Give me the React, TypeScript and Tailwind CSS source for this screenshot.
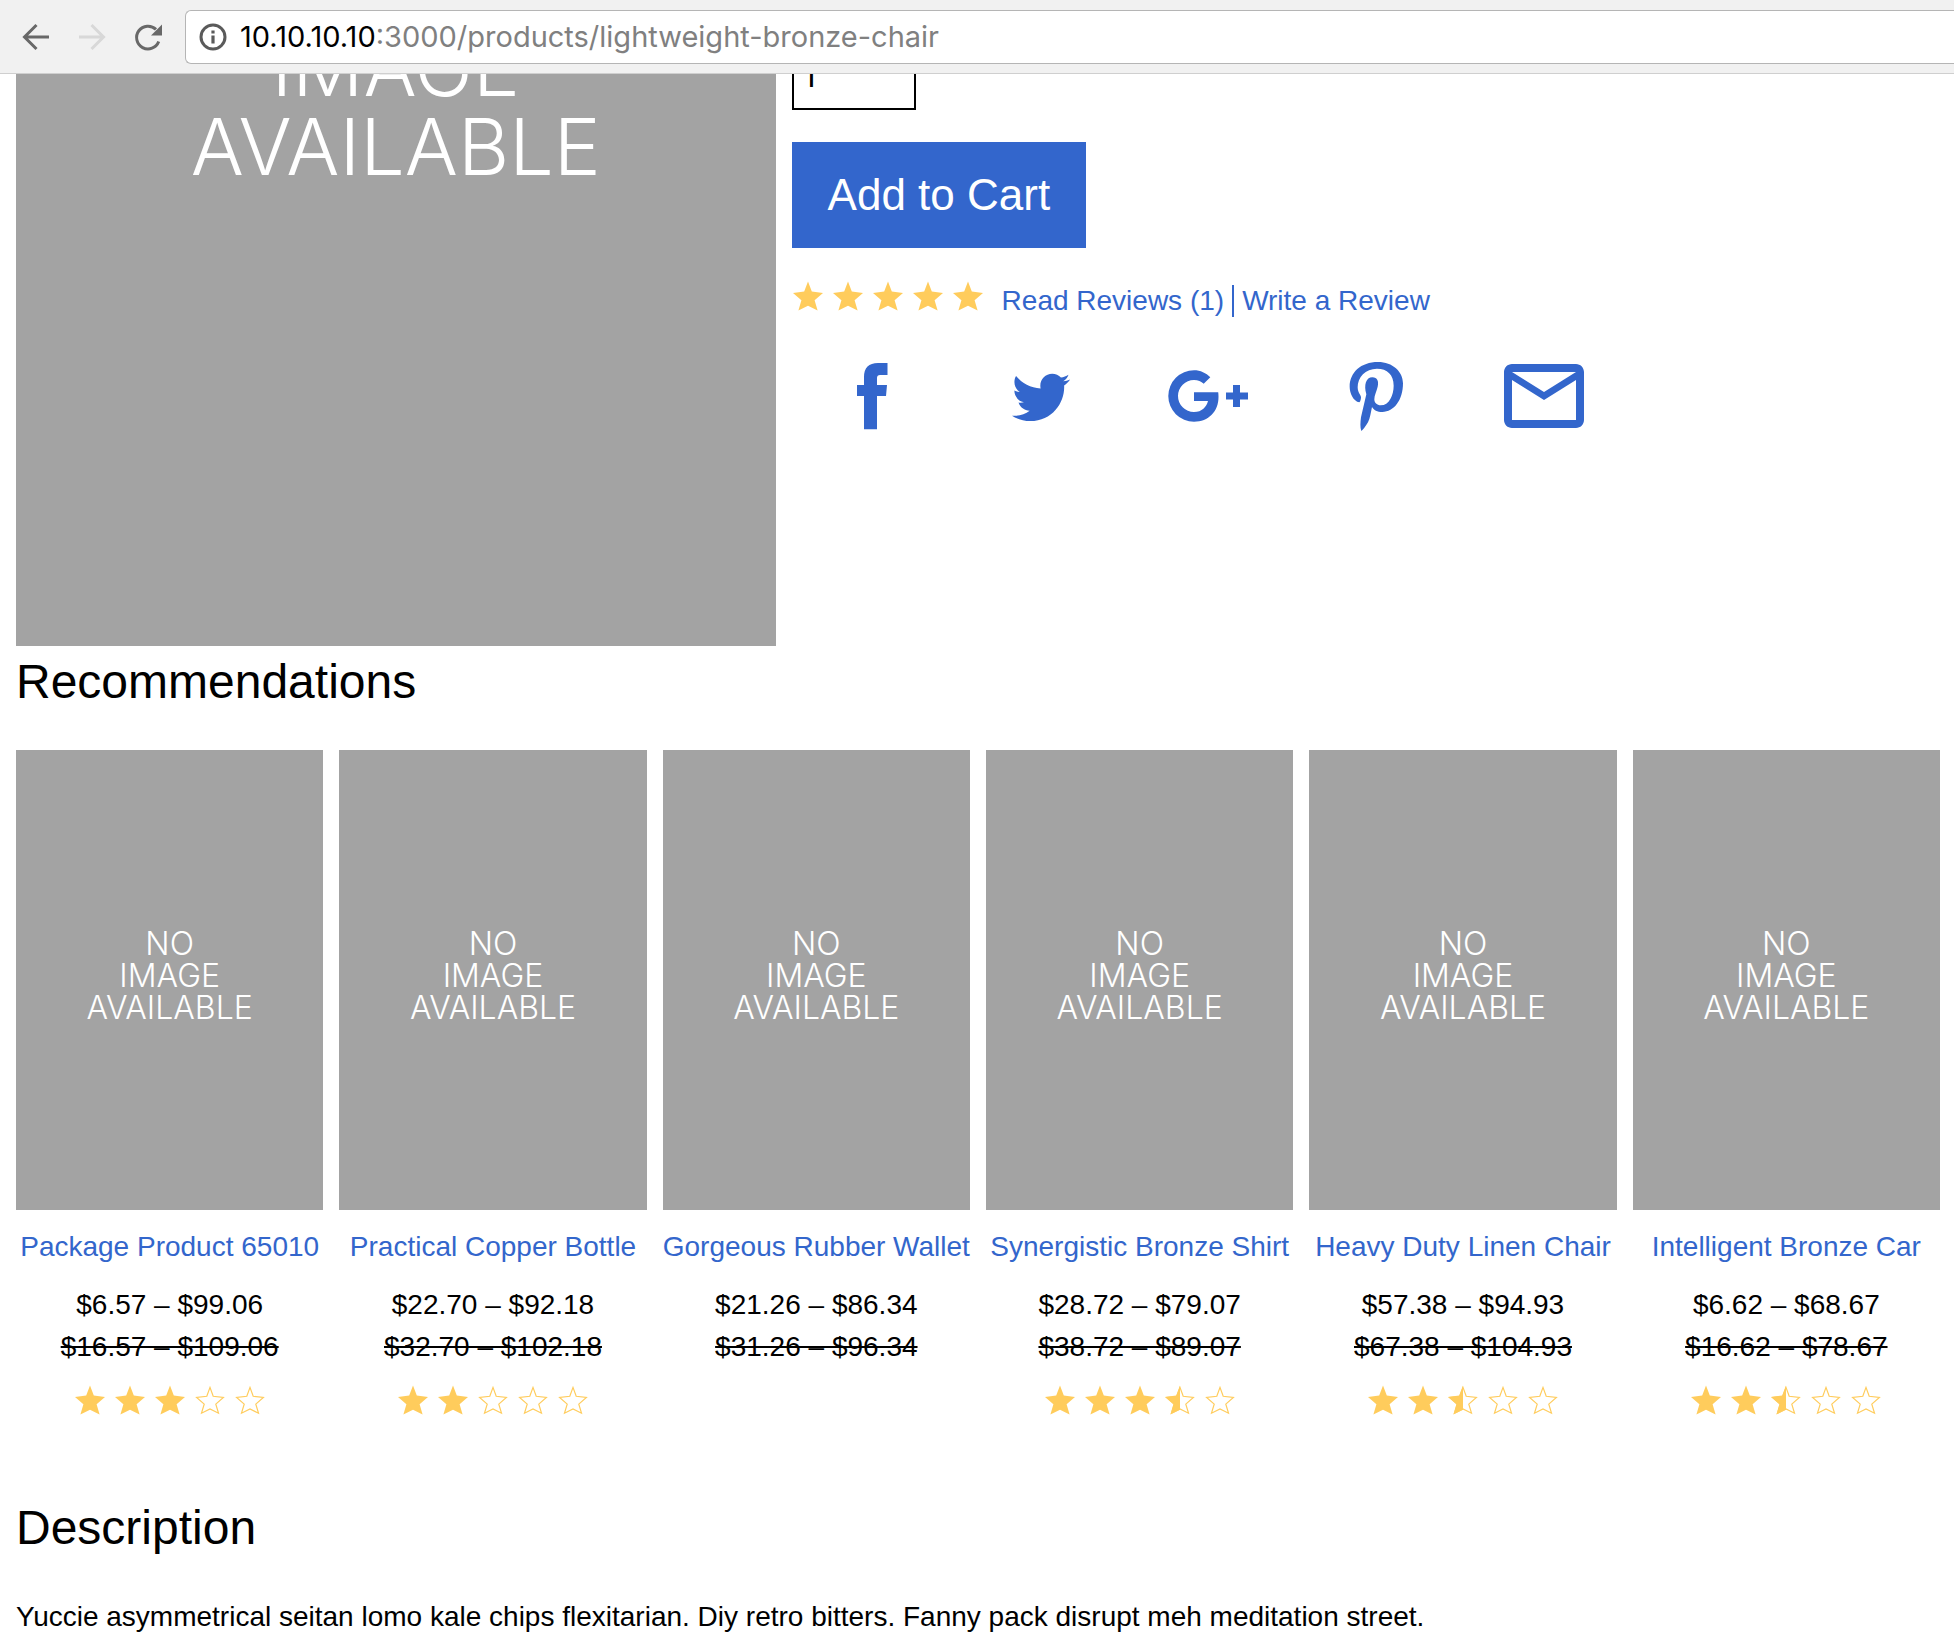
import React from "react";

type Fill = "full" | "half" | "empty";

const STAR =
  "M16 1.5 19.8 11.6 31 12.9 22.6 20.2 25.6 30.5 16 25.8 6.4 30.5 9.4 20.2 1 12.9 12.2 11.6Z";

function Star({ fill }: { fill: Fill }) {
  return (
    <svg viewBox="0 0 32 32" className="size-8 shrink-0" aria-hidden="true">
      {fill === "full" && <path d={STAR} fill="#ffcc5c" />}
      {fill === "half" && <path d="M16 1.5V25.8L6.4 30.5 9.4 20.2 1 12.9 12.2 11.6Z" fill="#ffcc5c" />}
      {fill !== "full" && (
        <path
          d="M16 3.4 19.2 12.3 29.4 13.5 21.8 20.1 24.5 29.2 16 25 7.5 29.2 10.2 20.1 2.6 13.5 12.8 12.3Z"
          fill="none"
          stroke="#ffcc5c"
          strokeWidth="1.2"
        />
      )}
    </svg>
  );
}

function Rating({ value }: { value: number }) {
  return (
    <div className="flex gap-2" role="img" aria-label={`${value} out of 5 stars`}>
      {[1, 2, 3, 4, 5].map((n) => (
        <Star key={n} fill={value >= n ? "full" : value >= n - 0.5 ? "half" : "empty"} />
      ))}
    </div>
  );
}

function Placeholder({ large = false }: { large?: boolean }) {
  return (
    <div className="flex aspect-[308/461] w-full shrink-0 items-center justify-center bg-[#a3a3a3]">
      <p
        className={
          large
            ? "pb-5 text-center font-[Inter] text-[79px] leading-[79px] font-light text-white"
            : "pb-2 text-center font-[Inter] text-[32px] leading-8 font-light text-white"
        }
      >
        NO
        <br />
        IMAGE
        <br />
        AVAILABLE
      </p>
    </div>
  );
}

const products = [
  { name: "Package Product 65010", price: "$6.57 – $99.06", was: "$16.57 – $109.06", rating: 3 },
  { name: "Practical Copper Bottle", price: "$22.70 – $92.18", was: "$32.70 – $102.18", rating: 2 },
  { name: "Gorgeous Rubber Wallet", price: "$21.26 – $86.34", was: "$31.26 – $96.34", rating: null },
  { name: "Synergistic Bronze Shirt", price: "$28.72 – $79.07", was: "$38.72 – $89.07", rating: 3.5 },
  { name: "Heavy Duty Linen Chair", price: "$57.38 – $94.93", was: "$67.38 – $104.93", rating: 2.5 },
  { name: "Intelligent Bronze Car", price: "$6.62 – $68.67", was: "$16.62 – $78.67", rating: 2.5 },
];

const shares = [
  {
    label: "Facebook",
    icon: (
      <path d="M63.5 15V27H56Q53 27 53 30V37H63L62 48H53V81.3H40V48H33V37H40V29Q40 15 54 15Z" />
    ),
  },
  {
    label: "Twitter",
    icon: (
      <path
        transform="translate(20 20.4) scale(.1135)"
        d="M459.37 151.716c.325 4.548.325 9.097.325 13.645 0 138.72-105.583 298.558-298.558 298.558-59.452 0-114.68-17.219-161.137-47.106 8.447.974 16.568 1.299 25.34 1.299 49.055 0 94.213-16.568 130.274-44.832-46.132-.975-84.792-31.188-98.112-72.772 6.498.974 12.995 1.624 19.818 1.624 9.421 0 18.843-1.3 27.614-3.573-48.081-9.747-84.143-51.98-84.143-102.985v-1.299c13.969 7.797 30.214 12.67 47.431 13.319-28.264-18.843-46.781-51.005-46.781-87.391 0-19.492 5.197-37.36 14.294-52.954 51.655 63.675 129.3 105.258 216.365 109.807-1.624-7.797-2.599-15.918-2.599-24.04 0-57.828 46.782-104.934 104.934-104.934 30.213 0 57.502 12.67 76.67 33.137 23.715-4.548 46.456-13.32 66.599-25.34-7.798 24.366-24.366 44.833-46.132 57.827 21.117-2.273 41.584-8.122 60.426-16.243-14.292 20.791-32.161 39.308-52.628 54.253z"
      />
    ),
  },
  {
    label: "Google Plus",
    icon: (
      <>
        <path d="M58.2 44.3H34V53H48C46.5 59 42 64 34 64A16 16 0 1 1 34 32C38 32 41.3 33.4 43.7 35.7L50.3 29.3C46 25 40.5 22.3 34 22.3A25.7 25.7 0 1 0 34 73.7C48.5 73.7 58.5 63.5 58.5 49C58.5 47 58.4 45.8 58.2 44.3Z" />
        <path d="M73 37H80V44.4H88V51.6H80V59H73V51.6H66V44.4H73Z" />
      </>
    ),
  },
  {
    label: "Pinterest",
    icon: (
      <path
        transform="translate(-188 -8) scale(.33333)"
        d="M658 187C640 183 629 160 629 140C629 98 662 66 714 66C758 66 789 95 789 130C789 180 762 216 727 216C712 216 701 210 696 201C693 215 690 235 684 247C677 259 670 268 664 273C660 262 661 248 663 232L679 163C671 135 678 112 697 112C712 112 717 124 713 140C710 153 703 166 703 178C703 189 711 196 722 196C748 196 761 165 761 137C761 104 742 86 711 86C676 86 653 112 653 142C653 158 663 166 663 172C663 178 660 187 658 187Z"
      />
    ),
  },
  {
    label: "Email",
    icon: (
      <path
        transform="scale(4)"
        d="M20 4H4c-1.1 0-2 .9-2 2v12c0 1.1.9 2 2 2h16c1.1 0 2-.9 2-2V6c0-1.1-.9-2-2-2zm0 14H4V8l8 5 8-5v10zm-8-7L4 6h16l-8 5z"
      />
    ),
  },
];

function Toolbar() {
  return (
    <header className="flex h-[74px] items-center border-b border-[#cfcfcf] bg-[#f1f1f1] pl-5">
      <nav className="flex gap-6">
        <button aria-label="Back" className="size-8">
          <svg viewBox="0 0 32 32" fill="none" stroke="#686868" strokeWidth="3" className="size-8">
            <path d="M29 16H5M16.5 4 4.5 16 16.5 28" />
          </svg>
        </button>
        <button aria-label="Forward" className="size-8" disabled>
          <svg viewBox="0 0 32 32" fill="none" stroke="#d8d8d8" strokeWidth="3" className="size-8">
            <path d="M3 16H27M15.5 4 27.5 16 15.5 28" />
          </svg>
        </button>
        <button aria-label="Reload" className="size-8">
          <svg viewBox="0 0 32 32" className="size-8">
            <path
              d="M24 8.4A11.4 11.4 0 1 0 26.7 20.5"
              fill="none"
              stroke="#686868"
              strokeWidth="3"
            />
            <path d="M30 3.5V14.5H19Z" fill="#686868" />
          </svg>
        </button>
      </nav>
      <div className="ml-[21px] flex h-[54px] flex-1 items-center rounded-l-md border border-r-0 border-[#b5b5b5] bg-white pl-[13px]">
        <svg viewBox="0 0 28 28" className="size-7 shrink-0" aria-hidden="true">
          <circle cx="14" cy="14" r="12" fill="none" stroke="#5a5a5a" strokeWidth="3" />
          <path d="M12.4 7.5h3.2v3h-3.2zM12.4 12.5h3.2v8h-3.2z" fill="#5a5a5a" />
        </svg>
        <div
          role="textbox"
          aria-label="Address"
          className="pl-[13px] font-[Inter] text-[29px] leading-9 whitespace-nowrap text-[#808080]"
        >
          <span className="text-black">10.10.10.10</span>:3000/products/lightweight-bronze-chair
        </div>
      </div>
    </header>
  );
}

export default function App() {
  return (
    <div className="min-h-screen bg-white font-['Liberation_Sans',Arial,sans-serif] text-[28px] leading-[42px] text-black">
      <Toolbar />
      <main className="pr-[14px] pl-4">
        <section className="flex h-[572px] gap-4 overflow-hidden">
          <div className="flex w-[calc(40%-10px)] shrink-0 flex-col justify-end">
            <Placeholder large />
          </div>
          <div className="flex flex-1 flex-col items-start">
            <input
              aria-label="Quantity"
              defaultValue="1"
              className="-mt-9 h-[72px] w-[124px] shrink-0 border-2 border-black px-2 pt-1 font-[Roboto] text-[32px]"
            />
            <button className="mt-8 bg-[#3366cc] px-9 py-[27px] text-[44px] leading-[52px] text-white">
              Add to Cart
            </button>
            <div className="mt-7 flex items-center gap-[18px] text-[#3366cc]">
              <div className="pb-[10px]">
                <Rating value={5} />
              </div>
              <div className="flex items-center">
                <a href="#reviews" className="pr-2 leading-[50px]">
                  Read Reviews (1)
                </a>
                <a href="#write" className="border-l-2 border-[#3366cc] pl-2 leading-8">
                  Write a Review
                </a>
              </div>
            </div>
            <ul className="mt-[22px] flex gap-2 text-[#3366cc]">
              {shares.map((s) => (
                <li key={s.label} className="w-40">
                  <a href={`#${s.label}`} aria-label={s.label} className="flex justify-center">
                    <svg viewBox="0 0 96 96" fill="currentColor" className="size-24">
                      {s.icon}
                    </svg>
                  </a>
                </li>
              ))}
            </ul>
          </div>
        </section>

        <section>
          <h2 className="pt-2 text-[48px] leading-[56px]">Recommendations</h2>
          <ul className="mt-10 grid grid-cols-6 gap-4">
            {products.map((p) => (
              <li key={p.name} className="flex min-w-0 flex-col items-center whitespace-nowrap">
                <Placeholder />
                <a href="#product" className="mt-4 text-[#3366cc]">
                  {p.name}
                </a>
                <p className="mt-4">{p.price}</p>
                <s>{p.was}</s>
                {p.rating !== null && (
                  <div className="mt-4">
                    <Rating value={p.rating} />
                  </div>
                )}
              </li>
            ))}
          </ul>
        </section>

        <section className="mt-[84px]">
          <h2 className="text-[48px] leading-[56px]">Description</h2>
          <p className="mt-10">
            Yuccie asymmetrical seitan lomo kale chips flexitarian. Diy retro bitters. Fanny pack
            disrupt meh meditation street.
          </p>
        </section>
      </main>
    </div>
  );
}
